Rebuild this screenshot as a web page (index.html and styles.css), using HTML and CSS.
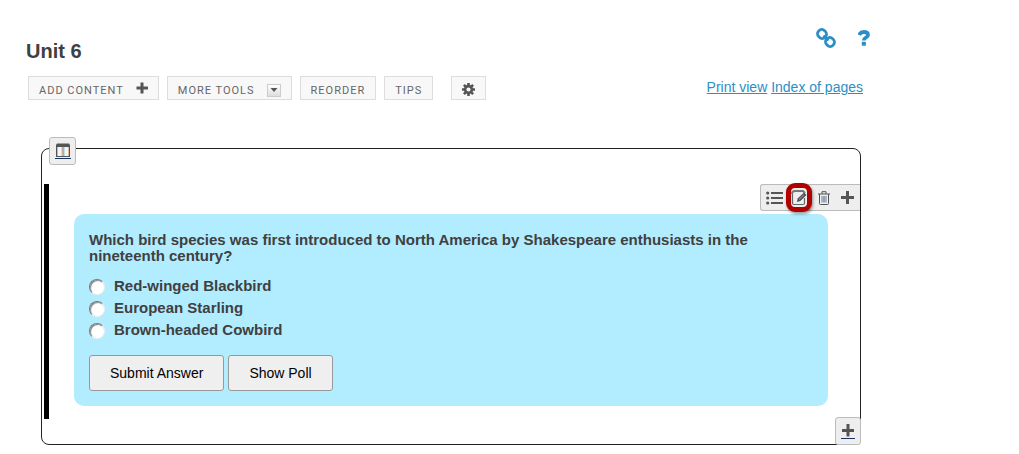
FILE: index.html
```
<!DOCTYPE html>
<html lang="en">
<head>
<meta charset="utf-8">
<title>Unit 6</title>
<link rel="stylesheet" href="styles.css">
</head>
<body>
<main class="page">
  <header class="header">
    <h1 class="title">Unit 6</h1>
    <nav class="help">
      <a class="help-link" href="#" aria-label="Direct link">
        <svg width="20" height="20" viewBox="0 0 20 20" fill="none" stroke="currentColor" stroke-width="2.800"><rect x="1.500" y="1.800" width="9" height="8.400" rx="4" transform="rotate(45 6 6)"/><rect x="9.500" y="9.800" width="9" height="8.400" rx="4" transform="rotate(45 14 14)"/><path d="M7.500 7.500l5 5" stroke-width="2.400"/></svg>
      </a>
      <a class="help-link" href="#" aria-label="Help">
        <svg width="12" height="16" viewBox="0 0 12 16" fill="none" stroke="currentColor"><path d="M1 5C2 2.800 3.400 2 5.700 2c2.500 0 4.300 1 4.300 2.900 0 2.700-4.200 2.500-4.200 5.500" stroke-width="3.800"/><path d="M3.800 11.800h4.100v3.900H3.800z" fill="currentColor" stroke="none"/></svg>
      </a>
    </nav>
  </header>
  <div class="tools">
    <button class="tool" type="button">ADD CONTENT
      <svg class="plus" width="12" height="12" viewBox="0 0 12 12" fill="#555"><path d="M4.500.500h3v4H12v3H7.500v4h-3v-4H.500v-3h4z"/></svg>
    </button>
    <button class="tool" type="button">MORE TOOLS
      <span class="arrow"><svg width="8" height="4" viewBox="0 0 8 4" fill="#555"><path d="M.500 0h7L4 4z"/></svg></span>
    </button>
    <button class="tool" type="button">REORDER</button>
    <button class="tool" type="button">TIPS</button>
    <button class="tool tool-gear" type="button" aria-label="Settings">
      <svg width="13" height="13" viewBox="0 0 13 13" fill="none" stroke="#555"><circle cx="6.500" cy="6.500" r="3.400" stroke-width="2.600"/><path d="M6.500 0v2.500M6.500 10.500V13M0 6.500h2.500M10.500 6.500H13M1.900 1.900l1.800 1.800M9.300 9.300l1.800 1.800M11.100 1.900L9.300 3.700M3.700 9.300l-1.800 1.800" stroke-width="2.600"/></svg>
    </button>
    <nav class="links"><a href="#">Print view</a> <a href="#">Index of pages</a></nav>
  </div>
  <section class="frame">
    <button class="corner corner-top" type="button" aria-label="Columns">
      <svg width="16" height="17" viewBox="0 0 16 17"><path d="M2 .500h12l1 1.500v12H1V2z" fill="#555"/><path d="M2 4h5.500v9H2zM8.500 4H14v9H8.500z" fill="#f4f4f4"/><path d="M2.500 4v9M9 4v9" stroke="#8fcbd2"/><path d="M7 4v9M13.500 4v9" stroke="#dfb99e"/><path d="M0 15.500h16" stroke="#173467"/></svg>
    </button>
    <div class="item">
      <div class="item-tools">
        <button class="icon" type="button" aria-label="List">
          <svg width="17" height="14" viewBox="0 0 17 14" fill="#555"><path d="M5 1h12v2H5zM5 6h12v2H5zM5 11h12v2H5z"/><circle cx="1.700" cy="2" r="1.600"/><circle cx="1.700" cy="7" r="1.600"/><circle cx="1.700" cy="12" r="1.600"/></svg>
        </button>
        <button class="icon icon-edit" type="button" aria-label="Edit">
          <svg width="16" height="16" viewBox="0 0 16 16"><path d="M13.500 8v5q0 1.500-1.500 1.500H3Q1.500 14.500 1.500 13V4" fill="none" stroke="#666" stroke-width="1.200"/><path d="M1 4q0-3 3-3h8l2 2" fill="none" stroke="#777" stroke-width="2"/><path d="M6 12l.7-3.500L13 2.500l2.500 2.500L9.300 11z" fill="#4a5058"/><path d="M8 9.500l4.800-4.700" stroke="#aaa"/></svg>
        </button>
        <button class="icon" type="button" aria-label="Delete">
          <svg width="12" height="14" viewBox="0 0 12 14" fill="none" stroke="#555"><path d="M0 3h12M4 3V.700h4V3M1.500 3v9.500q0 1 1 1h7q1 0 1-1V3"/><path d="M4 5v6.500M8 5v6.500" stroke="#5a81ba"/><path d="M6 5v6.500"/></svg>
        </button>
        <button class="icon" type="button" aria-label="Add">
          <svg width="13" height="13" viewBox="0 0 13 13" fill="#555"><path d="M5 0h3v5h5v3H8v5H5V8H0V5h5z"/></svg>
        </button>
      </div>
      <form class="poll">
        <fieldset class="choices">
          <legend class="question">Which bird species was first introduced to North America by Shakespeare enthusiasts in the nineteenth century?</legend>
          <label class="choice"><input class="radio" type="radio" name="bird">Red-winged Blackbird</label>
          <label class="choice"><input class="radio" type="radio" name="bird">European Starling</label>
          <label class="choice"><input class="radio" type="radio" name="bird">Brown-headed Cowbird</label>
        </fieldset>
        <div class="actions">
          <button class="action" type="button">Submit Answer</button>
          <button class="action" type="button">Show Poll</button>
        </div>
      </form>
    </div>
    <button class="corner corner-bottom" type="button" aria-label="Add below">
      <svg width="14" height="17" viewBox="0 0 14 17"><path d="M5.500 1h3v5H13v3H8.500v4.500h-3V9H1V6h4.500z" fill="#555"/><path d="M0 15.500h14" stroke="#173467"/></svg>
    </button>
  </section>
</main>
</body>
</html>
```
FILE: styles.css
```
* { box-sizing: border-box; }
body {
  margin: 0;
  background: #fff;
  color: #404040;
  font-family: "Liberation Sans", Arial, sans-serif;
  font-size: 14px;
}
button { font: inherit; padding: 0; margin: 0; }
svg { display: block; flex: none; }
.page { padding: 24px 148px 9px 26px; }
.header { display: flex; justify-content: space-between; height: 52px; }
.title { margin: 14px 0 0; font-size: 20px; line-height: 26px; }
.help { display: flex; gap: 22px; align-items: center; height: 28px; padding-right: 1px; }
.help-link { color: #2a8fc7; }
.tools { display: flex; gap: 8px; padding: 0 8px 0 2px; }
.tool {
  display: flex;
  align-items: center;
  gap: 12px;
  height: 24px;
  padding: 4px 10px 0;
  border: 1px solid #ddd;
  background: #f8f8f8;
  color: #666;
  font-family: Roboto, sans-serif;
  font-size: 11px;
  letter-spacing: 1px;
}
.plus { margin-bottom: 4px; }
.arrow {
  display: grid;
  place-items: center;
  width: 14px;
  height: 13px;
  border: 1px solid #ccc;
  background: linear-gradient(#fff, #ddd);
}
.tool-gear { margin-left: 10px; padding-top: 2px; }
.links { margin-left: auto; line-height: 22px; }
.links a { color: #2a8fc7; }
.frame {
  position: relative;
  margin: 48px 10px 0 15px;
  padding: 35px 0 25px 2px;
  border: 1px solid #222;
  border-radius: 8px;
}
.corner {
  position: absolute;
  display: grid;
  place-items: center;
  width: 27px;
  height: 28px;
  border: 1px solid #bbb;
  border-radius: 3px;
  background: #eee;
}
.corner-top { top: -12px; left: 7px; }
.corner-bottom { right: -1px; bottom: -1px; width: 26px; }
.item { padding: 0 0 13px 25px; border-left: 5px solid #000; }
.item-tools {
  display: flex;
  align-items: center;
  width: max-content;
  height: 27px;
  margin: 0 0 3px auto;
  padding: 0 4px;
  border: 1px solid #bbb;
  border-right: 0;
  border-radius: 3px 0 0 3px;
  background: #eee;
}
.icon {
  display: grid;
  place-items: center;
  width: 18px;
  height: 25px;
  margin-right: 5px;
  border: 0;
  background: none;
}
.icon:last-child { margin-right: 0; }
.icon-edit {
  width: 26px;
  height: 29px;
  margin-right: 3px;
  margin-left: -2px;
  border: 5px solid #b00000;
  border-radius: 9px;
  background: #eee;
  box-shadow: 1px 2px 3px #0006;
}
.poll {
  margin-right: 32px;
  padding: 18px 15px 15px;
  border-radius: 10px;
  background: #b2ecff;
}
.choices { margin: 0; padding: 0; border: 0; min-width: 0; font-size: 15px; font-weight: bold; }
.question { margin-bottom: 10px; padding: 0; line-height: 16px; }
.choice { display: flex; align-items: center; gap: 9px; height: 22px; }
.radio {
  appearance: none;
  width: 16px;
  height: 16px;
  margin: 4px 0 0;
  border: 1px solid;
  border-color: #777 #eee #eee #777;
  border-radius: 50%;
  background: #fff;
  box-shadow: inset 1px 1px 1px #888;
}
.actions { display: flex; gap: 4px; margin-top: 15px; }
.action {
  height: 36px;
  padding: 0 20px;
  border: 1px solid #999;
  border-radius: 3px;
  background: #efefef;
  color: #000;
}
```
